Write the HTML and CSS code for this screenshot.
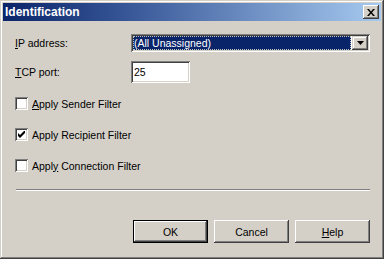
FILE: index.html
```html
<!DOCTYPE html>
<html>
  <head>
    <title>Identification</title>
    <meta name="viewport" content="width=device-width, initial-scale=1.0" />
    <link rel="stylesheet" href="styles.css">
  </head>
  <body>
    <div class="window">
      <div class="titlebar">
        <span class="title">Identification</span>
        <button class="close" aria-label="Close">
          <svg width="8" height="7" viewBox="0 0 8 7">
            <path d="M0 0h2l2 2.5L6 0h2L5 3.5 8 7H6L4 4.5 2 7H0l3-3.5z" fill="black" />
          </svg>
        </button>
      </div>
      <div class="content">
        <div class="field">
          <label><u>I</u>P address:</label>
          <div class="select">
            <span class="value"><span class="focus">(All Unassigned)</span></span>
            <span class="arrow">
              <svg width="7" height="4" viewBox="0 0 7 4"><path d="M0 0h7L3.5 4z" fill="black" /></svg>
            </span>
          </div>
        </div>
        <div class="field port">
          <label><u>T</u>CP port:</label>
          <div class="input">25</div>
        </div>
        <div class="checks">
          <div class="check"><span class="box"></span><span><u>A</u>pply Sender Filter</span></div>
          <div class="check">
            <span class="box">
              <svg width="7" height="7" viewBox="0 0 7 7"><path d="M0 2v3l2 2 5-5V-1L2 4z" fill="black" /></svg>
            </span>
            <span>Apply Recipient Filter</span>
          </div>
          <div class="check"><span class="box"></span><span>Appl<u>y</u> Connection Filter</span></div>
        </div>
        <hr class="sep" />
        <div class="buttons">
          <button class="btn default">OK</button>
          <button class="btn">Cancel</button>
          <button class="btn"><u>H</u>elp</button>
        </div>
      </div>
    </div>
  </body>
</html>
```

FILE: styles.css
```css
body {
  margin: 0;
  font-family: "Liberation Sans", Arial, sans-serif;
  font-size: 10.5px;
  color: black;
  background: #d4d0c8;
}
.window {
  width: 384px;
  height: 259px;
  box-sizing: border-box;
  padding: 3px;
  background: #d4d0c8;
  box-shadow: inset -1px -1px #404040, inset 1px 1px #d4d0c8,
    inset -2px -2px #808080, inset 2px 2px white;
}
.titlebar {
  height: 18px;
  display: flex;
  align-items: center;
  justify-content: space-between;
  padding: 0 2px 0 2px;
  background: linear-gradient(to right, #0a246a, #3a5a9a 35%, #a6caf0);
}
.title {
  color: white;
  font-weight: bold;
  font-size: 12px;
}
.close {
  width: 16px;
  height: 14px;
  padding: 0;
  border: none;
  display: flex;
  align-items: center;
  justify-content: center;
  background: #d4d0c8;
  box-shadow: inset -1px -1px #404040, inset 1px 1px white,
    inset -2px -2px #808080, inset 2px 2px #d4d0c8;
}
.content {
  padding: 13px 11px 0 12px;
}
.field {
  display: grid;
  grid-template-columns: 116px 1fr;
  align-items: center;
  height: 18px;
}
.field.port {
  margin-top: 9px;
  height: 22px;
}
.select,
.input,
.box {
  box-sizing: border-box;
  background: white;
  box-shadow: inset 1px 1px #808080, inset -1px -1px white,
    inset 2px 2px #404040, inset -2px -2px #d4d0c8;
}
.select {
  height: 18px;
  display: flex;
  padding: 2px;
  gap: 1px;
}
.value {
  flex: 1;
  background: #0a246a;
  color: white;
  display: flex;
  align-items: center;
  padding: 0 1px;
}
.focus {
  outline: 1px dotted #c0c0c0;
  outline-offset: 0;
  flex: 1;
  line-height: 12px;
}
.arrow {
  width: 16px;
  display: flex;
  align-items: center;
  justify-content: center;
  background: #d4d0c8;
  box-shadow: inset -1px -1px #404040, inset 1px 1px #d4d0c8,
    inset -2px -2px #808080, inset 2px 2px white;
}
.input {
  width: 59px;
  height: 22px;
  padding: 4px 3px;
  line-height: 14px;
}
.checks {
  margin-top: 14px;
  display: flex;
  flex-direction: column;
  gap: 18px;
}
.check {
  display: flex;
  align-items: center;
  gap: 4px;
  height: 13px;
}
.box {
  width: 13px;
  height: 13px;
  display: flex;
  align-items: center;
  justify-content: center;
}
.sep {
  margin: 17px 0 0 1px;
  height: 0;
  border: none;
  border-top: 1px solid #808080;
  border-bottom: 1px solid white;
}
.buttons {
  margin-top: 29px;
  display: flex;
  justify-content: flex-end;
  gap: 6px;
}
.btn {
  width: 75px;
  height: 23px;
  border: none;
  padding: 0;
  font: inherit;
  color: black;
  background: #d4d0c8;
  box-shadow: inset -1px -1px #404040, inset 1px 1px white,
    inset -2px -2px #808080, inset 2px 2px #d4d0c8;
}
.btn.default {
  box-shadow: inset 0 0 0 1px black, inset -2px -2px #404040,
    inset 2px 2px white, inset -3px -3px #808080;
}
```
